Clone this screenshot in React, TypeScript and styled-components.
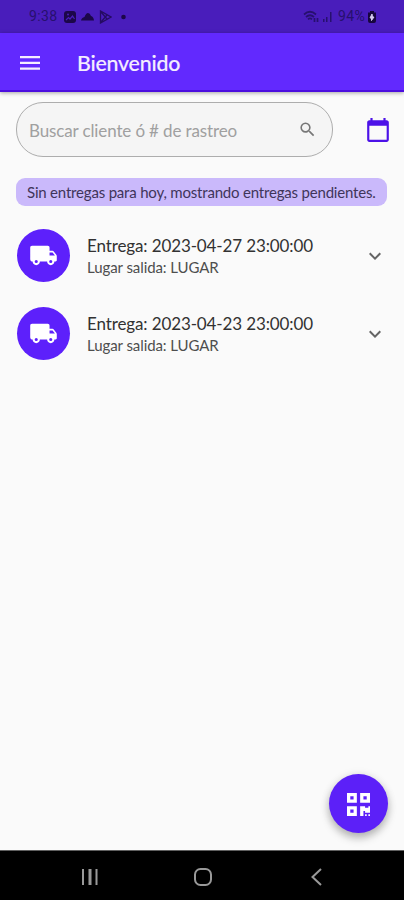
import React from "react";
import styled, { createGlobalStyle } from "styled-components";

const GlobalStyle = createGlobalStyle`
  * { box-sizing: border-box; }
  html, body { margin: 0; background: #fafafa; }
  body { font-family: Lato, sans-serif; }
  button { border: 0; padding: 0; background: none; font: inherit; }
  svg { display: block; flex: none; }
`;

const Screen = styled.div`
  width: 404px;
  height: 900px;
  display: flex;
  flex-direction: column;
  overflow: hidden;
  background: #fafafa;
`;

const StatusBar = styled.div`
  height: 33px;
  flex: none;
  display: flex;
  align-items: center;
  justify-content: space-between;
  padding: 0 27px 0 29px;
  background: #491dbb;
  color: #27106e;
  font: 14px/33px Roboto, sans-serif;
`;

const StatusGroup = styled.div<{ $gap: number }>`
  display: flex;
  align-items: center;
  gap: ${(p) => p.$gap}px;
`;

const Clock = styled.span`
  width: 29px;
  margin-right: 1px;
  letter-spacing: 0.35px;
`;

const Battery = styled.span`
  margin-left: 3px;
  letter-spacing: 0.3px;
`;

const AppBar = styled.header`
  height: 59px;
  flex: none;
  display: flex;
  align-items: center;
  gap: 35px;
  padding: 2px 18px 0;
  background: #6229fe;
  border-bottom: 2px solid #4b0ddf;
  box-shadow: 0 1px 4px rgba(0, 0, 0, 0.35);
  color: #f4edff;
`;

const Title = styled.h1`
  margin: 0;
  padding-top: 1px;
  font-size: 21.3px;
  font-weight: 500;
  line-height: 28px;
  letter-spacing: -0.18px;
  -webkit-text-stroke: 0.15px currentColor;
`;

const IconButton = styled.button<{ $color: string }>`
  display: grid;
  place-items: center;
  color: ${(p) => p.$color};
`;

const Content = styled.main`
  flex: 1;
  display: flex;
  flex-direction: column;
  padding: 10px 12px 17px 16px;
`;

const SearchRow = styled.div`
  display: flex;
  align-items: center;
  justify-content: space-between;
  padding-right: 1px;
`;

const SearchBox = styled.div`
  width: 317px;
  height: 55px;
  display: flex;
  align-items: center;
  justify-content: space-between;
  padding: 0 15px 0 12px;
  border: 1px solid #adadad;
  border-radius: 27px;
  background: #f5f5f5;
  color: #777;
`;

const Placeholder = styled.span`
  color: #a0a0a0;
  font-size: 17px;
  line-height: 24px;
  letter-spacing: -0.13px;
  padding-top: 2px;
`;

const Banner = styled.div`
  width: 371px;
  height: 28px;
  margin-top: 21px;
  border-radius: 9px;
  background: #cab9fb;
  color: #3f355a;
  font-size: 15px;
  line-height: 29px;
  letter-spacing: -0.19px;
  padding-left: 11px;
  white-space: nowrap;
`;

const List = styled.div`
  display: flex;
  flex-direction: column;
  gap: 25px;
  margin-top: 23px;
`;

const Row = styled.div`
  height: 53px;
  display: flex;
  align-items: center;
  padding: 0 5px 0 1px;
`;

const Avatar = styled.div`
  width: 53px;
  height: 53px;
  display: grid;
  place-items: center;
  border-radius: 50%;
  background: #5d20fb;
  color: #fff;
`;

const RowText = styled.div`
  flex: 1;
  padding-left: 17px;
  white-space: nowrap;
`;

const Primary = styled.div`
  color: #323232;
  font-size: 17px;
  line-height: 23px;
  letter-spacing: -0.12px;
`;

const Secondary = styled.div`
  color: #4e4e4e;
  font-size: 15px;
  line-height: 21px;
  letter-spacing: -0.08px;
`;

const Fab = styled.button`
  width: 59px;
  height: 59px;
  display: grid;
  place-items: center;
  align-self: flex-end;
  margin: auto 4px 0 0;
  padding-top: 2px;
  border-radius: 50%;
  background: #5c20f8;
  color: #fff;
  box-shadow: 0 5px 8px rgba(0, 0, 0, 0.25), 0 1px 10px rgba(0, 0, 0, 0.1);
`;

const NavBar = styled.nav`
  height: 50px;
  flex: none;
  display: flex;
  align-items: center;
  justify-content: space-between;
  padding: 2px 78px 0 80px;
  border-top: 1px solid #606060;
  background: #000;
  color: #999;
`;

const deliveries = [
  { date: "2023-04-27 23:00:00", origin: "LUGAR" },
  { date: "2023-04-23 23:00:00", origin: "LUGAR" },
];

const Glyph = ({ size, d }: { size: number; d: string }) => (
  <svg width={size} height={size} viewBox="0 0 24 24" fill="currentColor">
    <path d={d} />
  </svg>
);

const paths = {
  search:
    "M15.5 14h-.79l-.28-.27A6.47 6.47 0 0 0 16 9.5 6.5 6.5 0 1 0 9.5 16c1.61 0 3.09-.59 4.23-1.57l.27.28v.79l5 4.99L20.49 19l-4.99-5zm-6 0C7.01 14 5 11.99 5 9.5S7.01 5 9.5 5 14 7.01 14 9.5 11.99 14 9.5 14z",
  calendar:
    "M20 3h-1V1h-2v2H7V1H5v2H4c-1.1 0-2 .9-2 2v16c0 1.1.9 2 2 2h16c1.1 0 2-.9 2-2V5c0-1.1-.9-2-2-2zm0 18H4V8h16v13z",
  truck:
    "M19.5 8H17V5.5C17 4.6 16.4 4 15.5 4h-13C1.6 4 1 4.6 1 5.5V15c0 1.1.9 2 2 2 0 1.66 1.34 3 3 3s3-1.34 3-3h6c0 1.66 1.34 3 3 3s3-1.34 3-3h1c.55 0 1-.45 1-1v-3.33c0-.43-.14-.85-.4-1.2L20.3 8.4c-.19-.25-.49-.4-.8-.4zM6 18.3a1.3 1.3 0 1 1 0-2.6 1.3 1.3 0 0 1 0 2.6zm13.5-8.8 1.96 2.5H17V9.5h2.5zM18 18.3a1.3 1.3 0 1 1 0-2.6 1.3 1.3 0 0 1 0 2.6z",
  chevron: "M7.41 8.59 12 13.17l4.59-4.58L18 10l-6 6-6-6z",
};

export default function App() {
  return (
    <>
      <GlobalStyle />
      <Screen>
        <StatusBar>
          <StatusGroup $gap={5}>
            <Clock>9:38</Clock>
            <svg width="12" height="12" viewBox="0 0 12 12">
              <rect width="12" height="12" rx="3" fill="#1c0749" />
              <path d="M2 9 4.5 6.5 6 8l2.5-3L10.5 8" fill="none" stroke="#491dbb" strokeWidth="1.2" />
              <circle cx="4" cy="3.5" r="1" fill="#491dbb" />
            </svg>
            <svg width="13" height="9" viewBox="0 0 13 9" fill="#1c0749">
              <path d="M0 8.500q.5-3 3.500-3.500Q5 1 7 1q2 0 3 3 2.500.5 3 4.500z" />
            </svg>
            <svg width="13" height="14" viewBox="0 0 13 14" fill="none" stroke="#250b62" strokeWidth="1.3">
              <path d="M1.500 1v12L12 7zM2 2l6 7M2 12l6-7" />
            </svg>
            <svg width="12" height="6" viewBox="0 0 12 6">
              <circle cx="6.500" cy="3" r="2.300" fill="#1c0749" />
            </svg>
          </StatusGroup>
          <StatusGroup $gap={2}>
            <svg width="16" height="13" viewBox="0 0 16 13" fill="none" stroke="#27106e" strokeWidth="1.700">
              <path d="M1 4.500q6-5.500 12 0M3 7q4-3.500 8 0M5 9.300q2-1.800 4 0M11.500 8v4M14.500 8v4" />
            </svg>
            <svg width="12" height="11" viewBox="0 0 12 11" fill="#27106e">
              <path d="M2 8h1.500v3H2zM5 6h1.500v5H5zM9 1h1.500v10H9z" />
            </svg>
            <Battery>94%</Battery>
            <svg width="10" height="12" viewBox="0 0 10 12">
              <path d="M3 0h4v1.500h2V10q0 2-2 2H3q-2 0-2-2V1.500h2z" fill="#17063d" />
              <path d="M5 3 3 7h1.500v2.500L7 6H5.500z" fill="#d5caef" stroke="#d5caef" />
            </svg>
          </StatusGroup>
        </StatusBar>

        <AppBar>
          <IconButton $color="#f4edff" aria-label="Menú">
            <svg width="24" height="24" viewBox="0 0 24 24" fill="currentColor">
              <path d="M2 5h20v2.300H2zM2 10.700h20V13H2zM2 16.400h20v2.300H2z" />
            </svg>
          </IconButton>
          <Title>Bienvenido</Title>
        </AppBar>

        <Content>
          <SearchRow>
            <SearchBox>
              <Placeholder>Buscar cliente ó # de rastreo</Placeholder>
              <Glyph size={19} d={paths.search} />
            </SearchBox>
            <IconButton $color="#4c12e8" aria-label="Calendario">
              <Glyph size={26} d={paths.calendar} />
            </IconButton>
          </SearchRow>

          <Banner>Sin entregas para hoy, mostrando entregas pendientes.</Banner>

          <List>
            {deliveries.map((item) => (
              <Row key={item.date}>
                <Avatar>
                  <Glyph size={29} d={paths.truck} />
                </Avatar>
                <RowText>
                  <Primary>Entrega: {item.date}</Primary>
                  <Secondary>Lugar salida: {item.origin}</Secondary>
                </RowText>
                <IconButton $color="#646464" aria-label="Expandir">
                  <Glyph size={24} d={paths.chevron} />
                </IconButton>
              </Row>
            ))}
          </List>

          <Fab aria-label="Escanear código">
            <svg width="23" height="23" viewBox="0 32 448 448" fill="currentColor">
              <path d="M0 224h192V32H0v192zM64 96h64v64H64V96zm192-64v192h192V32H256zm128 128h-64V96h64v64zM0 480h192V288H0v192zm64-128h64v64H64v-64zm352-64h32v128h-96v-32h-32v96h-64V288h96v32h64v-32zm0 160h32v32h-32v-32zm-64 0h32v32h-32v-32z" />
            </svg>
          </Fab>
        </Content>

        <NavBar>
          <svg width="20" height="18" viewBox="0 0 20 18" fill="currentColor">
            <path d="M2 1h2v16H2zM8.500 1h3v16h-3zM15.500 1h2v16h-2z" />
          </svg>
          <svg width="20" height="20" viewBox="0 0 20 20" fill="none" stroke="currentColor" strokeWidth="2">
            <rect x="2" y="2" width="16" height="16" rx="5.500" />
          </svg>
          <svg width="20" height="20" viewBox="0 0 20 20" fill="none" stroke="currentColor" strokeWidth="2">
            <path d="M15 2 6.500 10l8.500 8" />
          </svg>
        </NavBar>
      </Screen>
    </>
  );
}
